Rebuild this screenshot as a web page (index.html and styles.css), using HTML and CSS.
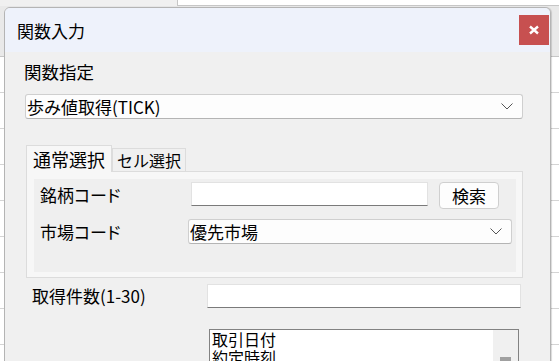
FILE: index.html
```html
<!DOCTYPE html>
<html lang="ja">
<head>
    <meta charset="UTF-8">
    <title>関数入力</title>
    <link rel="stylesheet" href="styles.css">
</head>
<body>
    <!-- 背景のシート -->
    <div class="sheet">
        <div class="formula-bar"><div class="formula-input"></div></div>
        <div class="col-header"></div>
        <div class="grid"></div>
    </div>

    <!-- 関数入力ダイアログ -->
    <div class="dialog">
        <div class="dialog-title">
            <span>関数入力</span>
            <button class="close-btn">
                <svg width="12" height="10" viewBox="0 0 12 10"><path d="M2 1.5 L10 8.5 M10 1.5 L2 8.5" stroke="#fff" stroke-width="2.4" fill="none"/></svg>
            </button>
        </div>
        <div class="dialog-body">
            <div class="field-label">関数指定</div>
            <div class="select func-select">
                <span>歩み値取得(TICK)</span>
                <svg width="12" height="7" viewBox="0 0 12 7"><path d="M0.5 0.5 L6 6 L11.5 0.5" stroke="#555" stroke-width="1" fill="none"/></svg>
            </div>

            <div class="tabs">
                <div class="tab active">通常選択</div>
                <div class="tab">セル選択</div>
            </div>
            <div class="tab-panel">
                <div class="panel-inner">
                    <div class="row code-row">
                        <label class="row-label">銘柄コード</label>
                        <div class="input code-input"></div>
                        <button class="btn">検索</button>
                    </div>
                    <div class="row market-row">
                        <label class="row-label">市場コード</label>
                        <div class="select market-select">
                            <span>優先市場</span>
                            <svg width="12" height="7" viewBox="0 0 12 7"><path d="M0.5 0.5 L6 6 L11.5 0.5" stroke="#555" stroke-width="1" fill="none"/></svg>
                        </div>
                    </div>
                </div>
            </div>

            <div class="row count-row">
                <label class="row-label">取得件数(1-30)</label>
                <div class="input count-input"></div>
            </div>

            <div class="listbox">
                <div class="list-items">
                    <div>取引日付</div>
                    <div>約定時刻</div>
                </div>
                <div class="scrollbar"><div class="thumb"></div></div>
            </div>
        </div>
    </div>
</body>
</html>
```

FILE: styles.css
```css
body {
    margin: 0;
    width: 559px;
    height: 361px;
    overflow: hidden;
    position: relative;
    font-family: "Noto Sans CJK JP", "Noto Sans", sans-serif;
    color: #000;
    background: #fff;
}

/* 背景シート */
.sheet {
    display: flex;
    flex-direction: column;
    height: 100%;
}

.formula-bar {
    height: 6px;
    background: #f0f0f0;
    padding-left: 177px;
    flex-shrink: 0;
}

.formula-input {
    height: 5px;
    background: #fff;
    border-left: 1px solid #c6c6c6;
    border-bottom: 1px solid #c6c6c6;
}

.col-header {
    height: 50px;
    background: #e9e9e9;
    border-bottom: 1px solid #c6c6c6;
    flex-shrink: 0;
}

.grid {
    flex-grow: 1;
    background: #fff repeating-linear-gradient(to bottom, transparent 0, transparent 35px, #d4d4d4 35px, #d4d4d4 36px);
}

/* ダイアログ */
.dialog {
    position: absolute;
    left: 4px;
    top: 7px;
    width: 545px;
    height: 380px;
    border: 1px solid #b4b4b4;
    border-radius: 6px 6px 0 0;
    background: #f0f0f0;
    box-shadow: 1px 0 1px rgba(0, 0, 0, 0.15);
    overflow: hidden;
}

.dialog-title {
    height: 44px;
    background: #eef2fb;
    display: flex;
    align-items: center;
    justify-content: space-between;
    padding-left: 12px;
    font-size: 17px;
}

.close-btn {
    width: 30px;
    height: 30px;
    margin-right: 1px;
    border: none;
    padding: 0;
    background: #c75050;
    display: flex;
    align-items: center;
    justify-content: center;
}

.dialog-body {
    padding: 10px 27px 0 20px;
}

.field-label {
    font-size: 17.5px;
    line-height: 20px;
    margin-left: -1px;
}

.select {
    box-sizing: border-box;
    height: 25px;
    background: #fdfdfd;
    border: 1px solid #cfcfcf;
    border-bottom-color: #b4b4b4;
    border-radius: 3px;
    display: flex;
    align-items: center;
    justify-content: space-between;
    padding: 0 9px 0 1px;
    font-size: 17px;
    line-height: 20px;
}

.func-select {
    margin-top: 12px;
}

/* タブ */
.tabs {
    display: flex;
    align-items: flex-end;
    margin-top: 26px;
    margin-left: 1px;
}

.tab {
    box-sizing: border-box;
    height: 23px;
    width: 74px;
    border: 1px solid #dcdcdc;
    border-bottom: none;
    background: #f0f0f0;
    font-size: 16px;
    line-height: 22px;
    text-align: center;
}

.tab.active {
    height: 27px;
    width: 86px;
    margin-bottom: -1px;
    background: #f7f7f7;
    font-size: 18px;
    line-height: 26px;
    position: relative;
}

.tab-panel {
    box-sizing: border-box;
    height: 107px;
    margin-left: 1px;
    border: 1px solid #dcdcdc;
    background: #f7f7f7;
    padding: 7px 6px 5px 7px;
}

.panel-inner {
    height: 100%;
    background: #efefef;
    padding: 3px 0 0 6px;
    box-sizing: border-box;
}

.row {
    display: flex;
    align-items: center;
}

.row-label {
    font-size: 17px;
    line-height: 20px;
    width: 151px;
    flex-shrink: 0;
    font-feature-settings: "palt";
}

.input {
    box-sizing: border-box;
    height: 24px;
    background: #fff;
    border: 1px solid #e2e2e2;
    border-bottom-color: #7a7a7a;
}

.code-row {
    align-items: flex-start;
    height: 27px;
}

.code-row .row-label {
    margin-top: 3px;
}

.code-input {
    width: 237px;
}

.btn {
    box-sizing: border-box;
    width: 60px;
    height: 27px;
    margin-left: 11px;
    background: #fdfdfd;
    border: 1px solid #cfcfcf;
    border-radius: 4px;
    font-family: inherit;
    font-size: 17px;
    line-height: 20px;
    padding: 0;
}

.market-row {
    margin-top: 10px;
}

.market-select {
    width: 324px;
    margin-left: -3px;
}

.count-row {
    margin-top: 6px;
    margin-left: 7px;
}

.count-row .row-label {
    width: 175px;
    font-feature-settings: normal;
}

.count-input {
    width: 314px;
}

/* リストボックス */
.listbox {
    box-sizing: border-box;
    width: 310px;
    height: 60px;
    margin: 21px 0 0 184px;
    border: 1px solid #828282;
    background: #fff;
    display: flex;
}

.list-items {
    flex-grow: 1;
    font-size: 16px;
    line-height: 18px;
    padding: 0 0 0 2px;
}

.scrollbar {
    width: 25px;
    background: #f0f0f0;
    padding: 27px 0 0 7px;
    box-sizing: border-box;
}

.thumb {
    width: 11px;
    height: 30px;
    background: #a0a0a0;
}
```
